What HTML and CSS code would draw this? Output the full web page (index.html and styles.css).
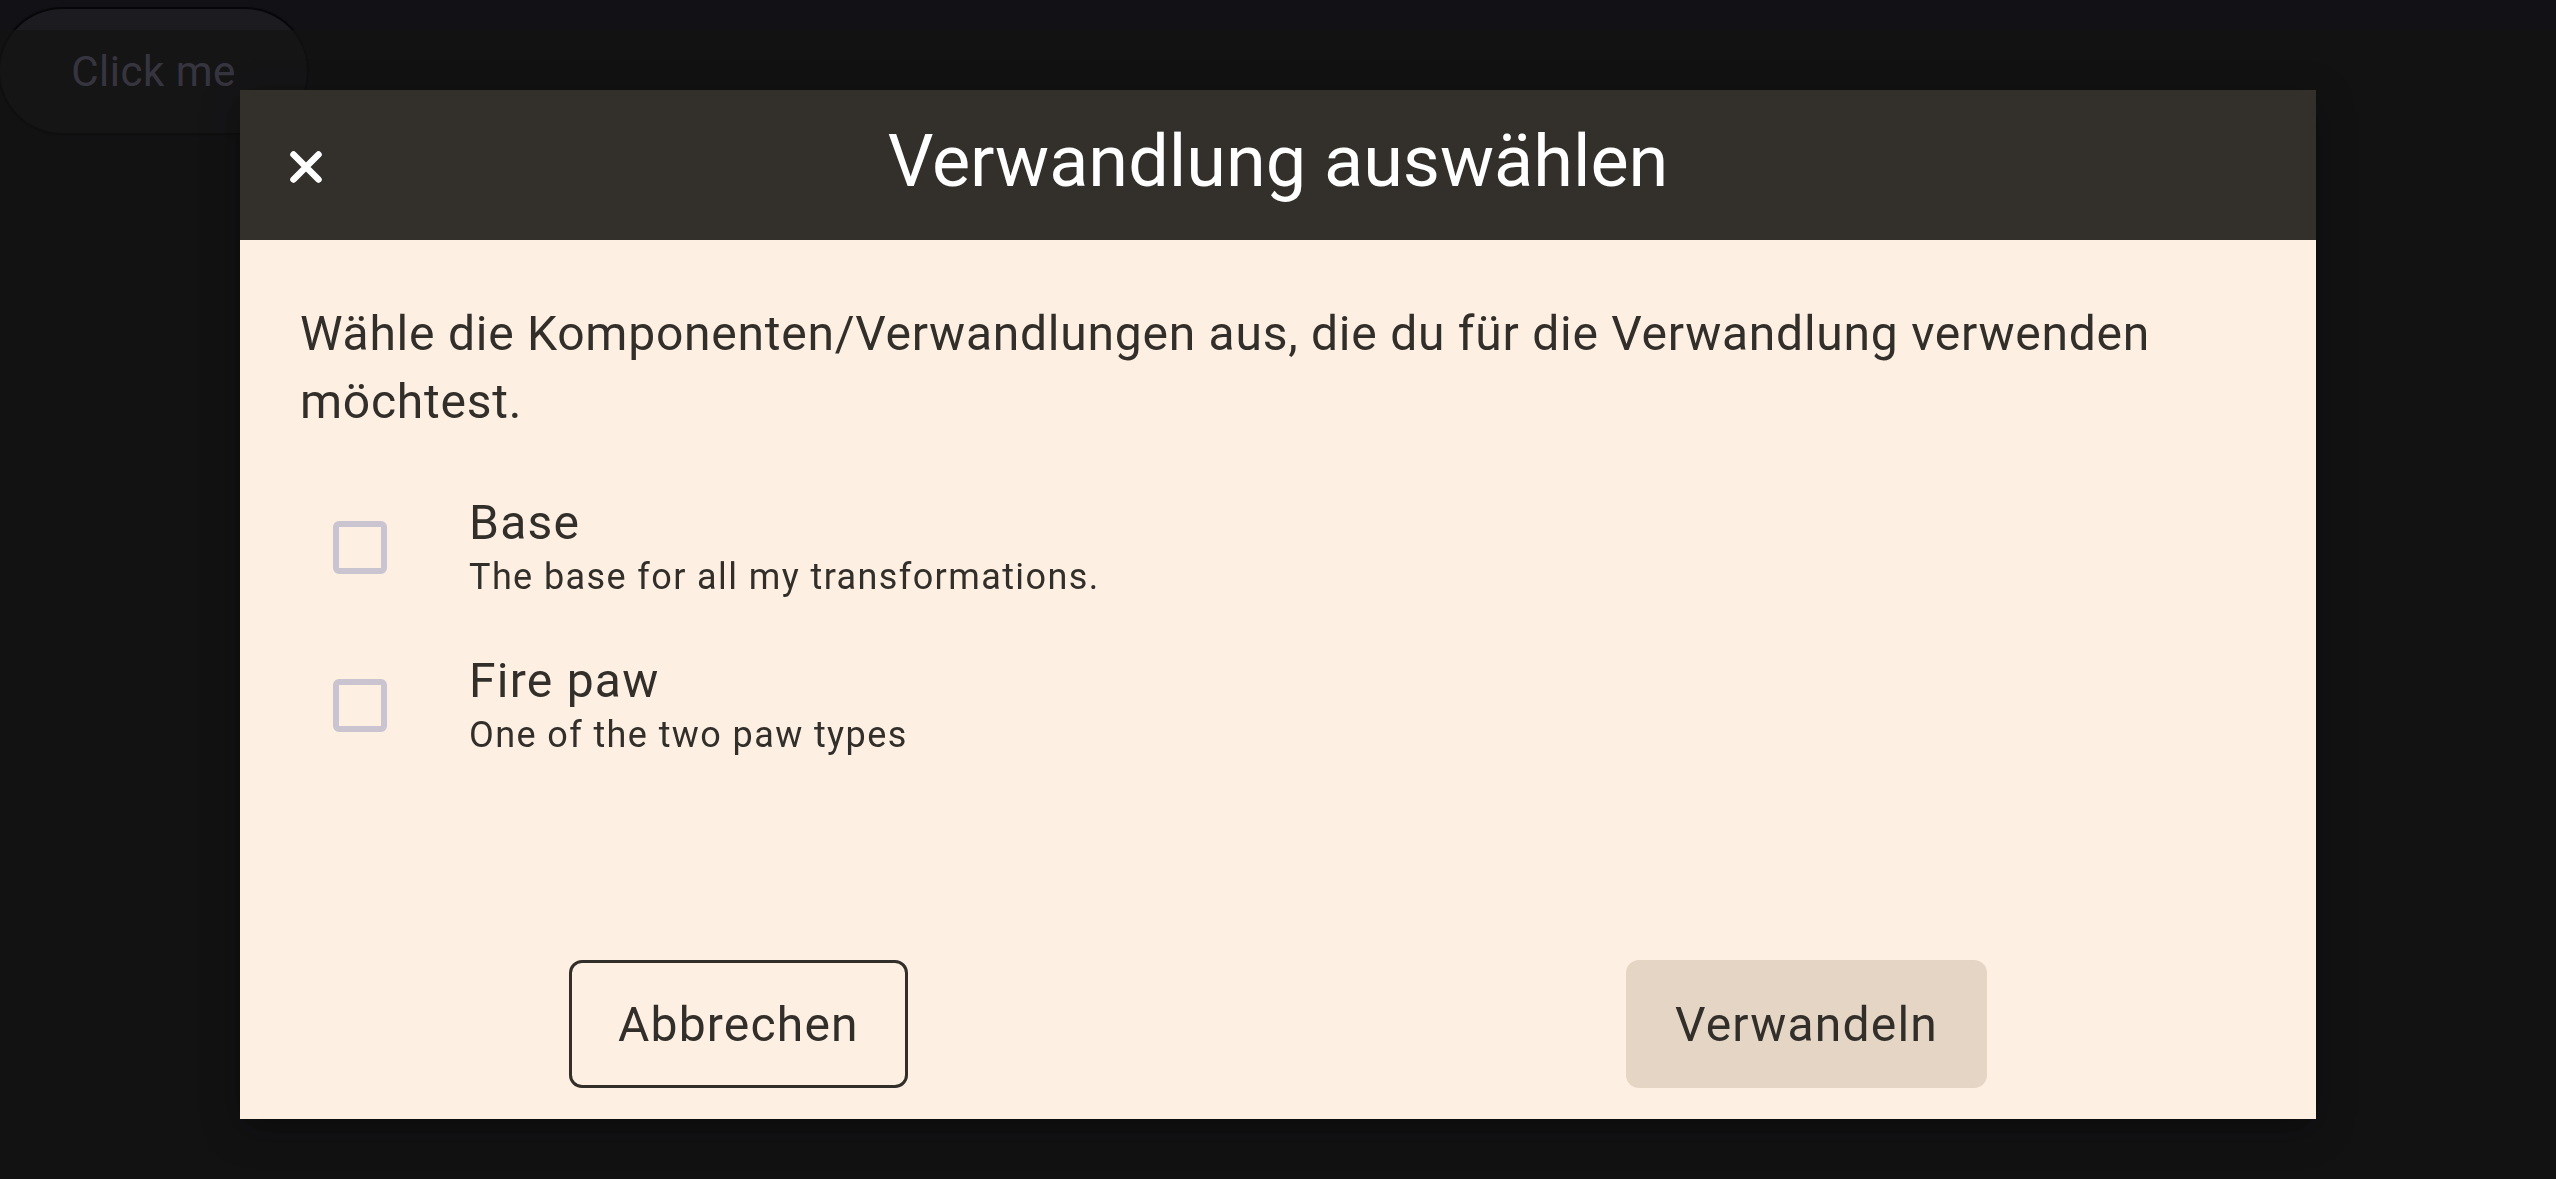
FILE: index.html
```html
<!DOCTYPE html>
<html lang="de">
<head>
<meta charset="utf-8">
<title>Verwandlung auswählen</title>
<link rel="stylesheet" href="styles.css">
</head>
<body>
<main class="page">
  <button class="click-btn" type="button">Click me</button>
</main>
<div class="overlay">
  <section class="dialog" role="dialog" aria-labelledby="dlg-title">
    <header class="dialog-header">
      <button class="close-btn" type="button" aria-label="Schließen">
        <svg width="32" height="32" viewBox="0 0 32 32" aria-hidden="true">
          <path d="M3.5 3.5 L28.5 28.5 M28.5 3.5 L3.5 28.5" stroke="#ffffff" stroke-width="6.5" stroke-linecap="round" fill="none"/>
        </svg>
      </button>
      <h1 class="dialog-title" id="dlg-title">Verwandlung auswählen</h1>
      <span class="header-spacer"></span>
    </header>
    <div class="dialog-content">
      <p class="intro">Wähle die Komponenten/Verwandlungen aus, die du für die Verwandlung verwenden möchtest.</p>
      <ul class="options">
        <li class="option">
          <span class="checkbox"></span>
          <div class="option-text">
            <span class="option-label">Base</span>
            <span class="option-desc">The base for all my transformations.</span>
          </div>
        </li>
        <li class="option">
          <span class="checkbox"></span>
          <div class="option-text">
            <span class="option-label">Fire paw</span>
            <span class="option-desc">One of the two paw types</span>
          </div>
        </li>
      </ul>
    </div>
    <footer class="dialog-footer">
      <button class="btn btn-outline" type="button">Abbrechen</button>
      <button class="btn btn-tonal" type="button">Verwandeln</button>
    </footer>
  </section>
</div>
</body>
</html>
```

FILE: styles.css
```css
* { box-sizing: border-box; }

html, body {
  margin: 0;
  padding: 0;
  height: 100%;
}

body {
  background: #121116;
  font-family: Roboto, "Noto Sans", "Liberation Sans", sans-serif;
  color: #322f2a;
  overflow: hidden;
}

.page {
  padding: 9px 0 0 0;
}

.click-btn {
  display: block;
  width: 307px;
  height: 124px;
  border: none;
  border-radius: 62px;
  background: #1c1b20;
  color: rgb(156, 150, 188);
  font-family: Roboto, "Noto Sans", sans-serif;
  font-size: 42px;
  font-weight: 400;
  letter-spacing: 0.5px;
  box-shadow: 0 0 0 2px rgba(0, 0, 0, 0.55), 0 2px 4px rgba(0, 0, 0, 0.5);
  padding: 0;
}

.overlay {
  position: fixed;
  top: 30px;
  left: 0;
  right: 0;
  bottom: 0;
  background: rgba(19, 19, 19, 0.74);
  display: flex;
  align-items: center;
  justify-content: center;
}

.dialog {
  width: 2076px;
  height: 1029px;
  background: #fdefe2;
  display: flex;
  flex-direction: column;
  box-shadow: 0 10px 34px rgba(0, 0, 0, 0.35);
}

.dialog-header {
  background: #332f2a;
  height: 150px;
  display: grid;
  grid-template-columns: 1fr auto 1fr;
  align-items: center;
  padding: 0;
}

.close-btn {
  justify-self: start;
  margin-left: 50px;
  margin-top: 3px;
  width: 32px;
  height: 32px;
  padding: 0;
  border: none;
  background: transparent;
  display: flex;
  overflow: visible;
}

.close-btn svg { overflow: visible; }

.dialog-title {
  margin: 0;
  font-size: 72px;
  font-weight: 400;
  line-height: 84px;
  color: #ffffff;
  margin-top: -7px;
}

.dialog-content {
  flex: 1;
  padding: 60px 60px 0 60px;
}

.intro {
  margin: 0;
  font-size: 48px;
  line-height: 68px;
  letter-spacing: 0.75px;
  color: #322f2a;
}

.options {
  list-style: none;
  margin: 32px 0 0 0;
  padding: 0;
}

.option {
  display: flex;
  align-items: center;
  padding: 25px 0;
}

.checkbox {
  flex: none;
  width: 54px;
  height: 53px;
  border: 6px solid #cac4d0;
  border-radius: 6px;
  margin-left: 33px;
  margin-right: 82px;
}

.option-text {
  display: flex;
  flex-direction: column;
}

.option-label {
  font-size: 48px;
  line-height: 60px;
  letter-spacing: 1.25px;
  color: #322f2a;
}

.option-desc {
  font-size: 36px;
  line-height: 48px;
  letter-spacing: 1.4px;
  color: #322f2a;
}

.dialog-footer {
  display: flex;
  justify-content: space-between;
  align-items: center;
  padding: 0 329px 31px 329px;
}

.btn {
  font-family: Roboto, "Noto Sans", sans-serif;
  font-size: 48px;
  font-weight: 400;
  letter-spacing: 1.2px;
  color: #322f2a;
  height: 128px;
  border-radius: 13px;
  cursor: pointer;
}

.btn-outline {
  background: transparent;
  border: 3px solid #322f2a;
  padding: 0 46px;
}

.btn-tonal {
  background: #e4d5c4;
  border: none;
  padding: 0 49px;
}
```
